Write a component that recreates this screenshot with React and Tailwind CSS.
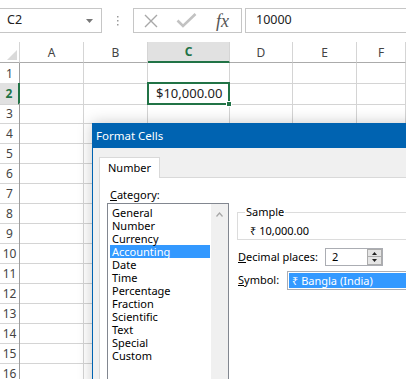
import React from 'react';

const cols = 'grid grid-cols-[20px_64px_64px_82px_63px_64px_1fr]';
const letters = ['A', 'B', 'C', 'D', 'E', 'F'];
const rows = Array.from({ length: 16 }, (_, i) => i + 1);
const categories = [
  'General', 'Number', 'Currency', 'Accounting', 'Date', 'Time',
  'Percentage', 'Fraction', 'Scientific', 'Text', 'Special', 'Custom',
];

const FormulaBar = () => (
  <div className="flex h-[42px] items-start pt-[8px]">
    <div className="flex h-[25px] w-[102px] items-center justify-between border border-l-0 border-[#c6c6c6] pl-[7px] pr-[8px] text-[12.5px] text-[#222]">
      <span>C2</span>
      <svg width="7" height="4" viewBox="0 0 7 4">
        <path d="M0 0 L7 0 L3.5 4 Z" fill="#777" />
      </svg>
    </div>
    <div className="flex h-[25px] w-[31px] items-center justify-center">
      <svg width="2" height="12" viewBox="0 0 2 12">
        <rect x="0" y="1" width="1.5" height="1.5" fill="#9a9a9a" />
        <rect x="0" y="5" width="1.5" height="1.5" fill="#9a9a9a" />
        <rect x="0" y="9" width="1.5" height="1.5" fill="#9a9a9a" />
      </svg>
    </div>
    <div className="flex h-[25px] w-[109px] items-center border border-[#c6c6c6]">
      <svg className="ml-[10px]" width="14" height="14" viewBox="0 0 14 14">
        <path d="M1 1 L13 13 M13 1 L1 13" stroke="#a8a8a8" strokeWidth="1.4" />
      </svg>
      <svg className="ml-[18px]" width="21" height="15" viewBox="0 0 21 15">
        <path d="M1.5 7.5 L7 13 L19.5 1" stroke="#c2c2c2" strokeWidth="2.6" fill="none" />
      </svg>
      <span className="ml-[19px] font-['Liberation_Serif',serif] text-[18px] italic leading-none text-[#555]">fx</span>
    </div>
    <div className="ml-[3px] flex h-[25px] flex-1 items-center border border-r-0 border-[#c6c6c6] pl-[10px] text-[12.5px] text-[#222]">
      10000
    </div>
  </div>
);

const Sheet = () => (
  <div>
    <div className={`${cols} h-[21px] text-[12px] text-[#444]`}>
      <div className="flex items-end justify-end border-r border-b border-[#ababab] border-r-[#d5d5d5] p-[2px]">
        <svg width="10" height="10" viewBox="0 0 10 10">
          <path d="M10 0 L10 10 L0 10 Z" fill="#dadada" />
        </svg>
      </div>
      {letters.map((l) =>
        l === 'C' ? (
          <div key={l} className="flex items-center justify-center border-r border-b-2 border-r-[#d5d5d5] border-b-[#217346] bg-[#e1e1e1] pt-[1px] font-bold text-[#217346]">
            {l}
          </div>
        ) : (
          <div key={l} className="flex items-center justify-center border-r border-b border-r-[#d5d5d5] border-b-[#ababab] pt-[1px]">
            {l}
          </div>
        )
      )}
    </div>
    {rows.map((r) => (
      <div key={r} className={`${cols} h-[20px]`}>
        {r === 2 ? (
          <div className="flex items-center justify-center border-r-2 border-b border-r-[#217346] border-b-[#d5d5d5] bg-[#e1e1e1] pt-[2px] text-[12px] font-bold text-[#217346]">
            {r}
          </div>
        ) : (
          <div className="flex items-center justify-center border-r border-b border-r-[#9e9e9e] border-b-[#d5d5d5] pt-[2px] text-[12px] text-[#444]">
            {r}
          </div>
        )}
        {letters.map((l) =>
          r === 2 && l === 'C' ? (
            <div key={l} className="relative flex items-center justify-between border-r border-b border-[#d4d4d4] px-[8px] pt-[1px] text-[13px] text-[#222]">
              <span>$</span>
              <span>10,000.00</span>
              <div className="absolute -top-[1px] -left-[1px] -right-[1px] -bottom-[1px] border-2 border-[#217346]" />
              <div className="absolute -right-[3px] -bottom-[3px] h-[6px] w-[6px] border border-white bg-[#217346]" />
            </div>
          ) : (
            <div key={l} className="border-r border-b border-[#d4d4d4]" />
          )
        )}
      </div>
    ))}
  </div>
);

const Triangle = ({ up }) => (
  <svg width="5" height="3" viewBox="0 0 5 3">
    <path d={up ? 'M0 3 L5 3 L2.5 0 Z' : 'M0 0 L5 0 L2.5 3 Z'} fill="#222" />
  </svg>
);

const Dialog = () => (
  <div className="absolute left-[92px] top-[123px] flex h-[290px] w-[330px] flex-col border-l border-[#0063b1] shadow-[0_0_14px_rgba(0,0,0,0.22)]">
    <div className="flex h-[25px] shrink-0 items-center bg-[#0063b1] pl-[3px] pt-[1px] text-[11.5px] text-white">Format Cells</div>
    <div className="flex-1 bg-[#f0f0f0] pl-[6px] pt-[9px] text-[11px] text-[#000]">
      <div className="relative z-10 -mb-[1px] flex h-[21px] w-[61px] items-center border border-b-0 border-[#d9d9d9] bg-white pl-[8px]">
        Number
      </div>
      <div className="flex h-[230px] items-start border border-[#d9d9d9] bg-white pl-[7px] pt-[10px]">
        <div className="w-[122px]">
          <div className="pl-[3px] leading-[14px]">
            <span className="underline">C</span>ategory:
          </div>
          <div className="mt-[1px] flex h-[210px] border border-[#828790]">
            <div className="flex-1 pt-[2px]">
              {categories.map((c) => (
                <div
                  key={c}
                  className={
                    c === 'Accounting'
                      ? 'ml-[2px] mr-[1px] h-[13px] bg-[#3399ff] pl-[2px] leading-[13px] text-white'
                      : 'ml-[2px] mr-[1px] h-[13px] pl-[2px] leading-[13px]'
                  }
                >
                  {c}
                </div>
              ))}
            </div>
            <div className="flex w-[17px] justify-center bg-[#f0f0f0] pt-[8px]">
              <svg width="7" height="5" viewBox="0 0 7 5">
                <path d="M0.5 4.5 L3.5 1 L6.5 4.5" stroke="#a6a6a6" strokeWidth="1.2" fill="none" />
              </svg>
            </div>
          </div>
        </div>
        <div className="ml-[8px] mt-[17px] flex-1">
          <fieldset className="border border-[#dcdcdc] pb-[1px] pl-[7px]">
            <legend className="px-[1px] leading-[14px]">Sample</legend>
            <div className="pl-[5px] pt-[5px] leading-[14px]">₹ 10,000.00</div>
          </fieldset>
          <div className="mt-[8px] flex h-[18px] items-center">
            <div className="w-[88px] pl-[1px]">
              <span className="underline">D</span>ecimal places:
            </div>
            <div className="flex h-[18px] w-[58px] border border-[#abadb3]">
              <div className="flex-1 pl-[6px] leading-[16px]">2</div>
              <div className="flex w-[15px] flex-col">
                <div className="flex h-[8px] items-center justify-center border border-[#acacac] bg-[#e5e5e5]">
                  <Triangle up />
                </div>
                <div className="flex h-[8px] items-center justify-center border border-t-0 border-[#acacac] bg-[#e5e5e5]">
                  <Triangle />
                </div>
              </div>
            </div>
          </div>
          <div className="mt-[5px] flex h-[19px] items-center">
            <div className="w-[50px] pl-[1px]">
              <span className="underline">S</span>ymbol:
            </div>
            <div className="h-[19px] flex-1 border border-[#abadb3] p-[1px]">
              <div className="h-[15px] bg-[#3399ff] pl-[3px] leading-[15px] text-white">₹ Bangla (India)</div>
            </div>
          </div>
        </div>
      </div>
    </div>
  </div>
);

const App = () => (
  <div className="relative h-[379px] w-[406px] overflow-hidden bg-white font-['Noto_Sans',sans-serif]">
    <FormulaBar />
    <Sheet />
    <Dialog />
  </div>
);

export default App;
